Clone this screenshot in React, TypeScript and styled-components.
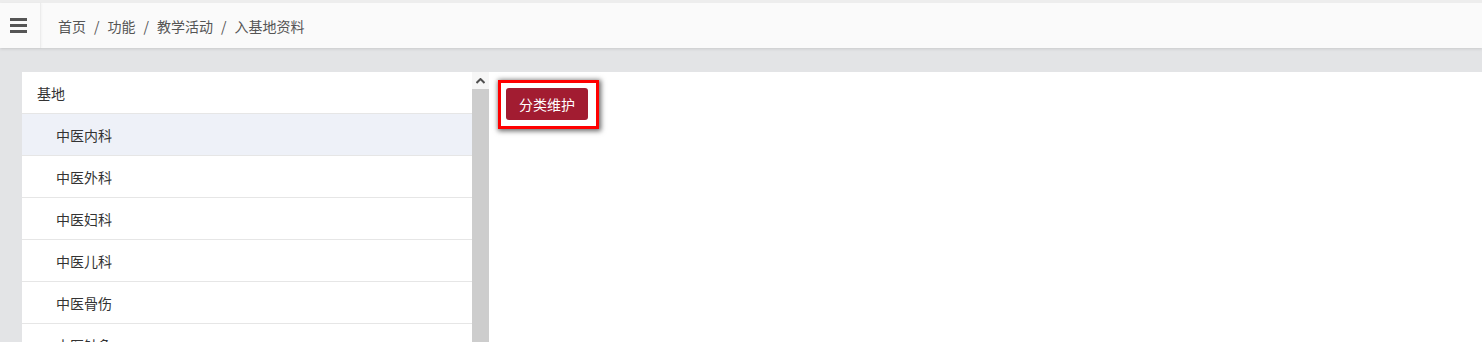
import React from "react";
import styled, { createGlobalStyle } from "styled-components";

const Global = createGlobalStyle`
  html, body { margin: 0; padding: 0; height: 342px; overflow: hidden; }
  body {
    background: #e3e4e6;
    font-family: "Microsoft YaHei", "Noto Sans CJK SC", "Noto Sans", sans-serif;
    font-size: 14px;
    color: #333;
  }
`;

const Page = styled.div`
  display: flex;
  flex-direction: column;
  height: 342px;
`;

const Header = styled.header`
  display: flex;
  align-items: stretch;
  height: 45px;
  border-top: 3px solid #ededed;
  background: #fafafa;
  box-shadow: 0 1px 3px rgba(0, 0, 0, 0.12);
  position: relative;
  z-index: 1;
`;

const MenuToggle = styled.div`
  width: 41px;
  display: flex;
  flex-direction: column;
  align-items: flex-start;
  justify-content: center;
  gap: 3px;
  padding-left: 10px;
  box-sizing: border-box;
  border-right: 1px solid #ececec;
  box-shadow: 1px 0 2px rgba(0, 0, 0, 0.03);
`;

const Bar = styled.span`
  display: block;
  width: 17px;
  height: 3px;
  background: #555;
`;

const Crumbs = styled.nav`
  display: flex;
  align-items: center;
  padding-left: 17px;
  color: #555;
  font-size: 14px;
`;

const Sep = styled.span`
  margin: 0 8px;
  color: #555;
`;

const Main = styled.main`
  flex: 1;
  display: flex;
  margin: 24px 0 0 22px;
  background: #fff;
  min-height: 0;
`;

const ListWrap = styled.div`
  display: flex;
  width: 467px;
  flex-shrink: 0;
`;

const List = styled.ul`
  list-style: none;
  margin: 0;
  padding: 0;
  width: 450px;
  flex-shrink: 0;
`;

const Item = styled.li<{ $level: number; $active?: boolean }>`
  height: 41px;
  display: flex;
  align-items: center;
  padding-left: ${(p) => (p.$level === 0 ? 15 : 34)}px;
  border-bottom: 1px solid #e6e6e6;
  background: ${(p) => (p.$active ? "#eef1f8" : "#fff")};
  color: #333;
  font-size: 14px;
`;

const Scrollbar = styled.div`
  width: 17px;
  display: flex;
  flex-direction: column;
  background: #cdcdcd;
`;

const ScrollArrow = styled.div`
  height: 17px;
  background: #f6f6f6;
  display: flex;
  align-items: center;
  justify-content: center;
`;

const Content = styled.section`
  flex: 1;
  padding: 8px 0 0 9px;
  background: #fff;
`;

const Highlight = styled.div`
  display: inline-block;
  border: 3px solid #ff0000;
  padding: 5px 8px 6px 5px;
  box-shadow: 1px 1px 5px 1px rgba(0, 0, 0, 0.6);
`;

const Button = styled.button`
  display: block;
  width: 82px;
  height: 32px;
  border: none;
  border-radius: 3px;
  background: #a21c31;
  color: #fff;
  font-family: inherit;
  font-size: 14px;
  padding: 0;
  cursor: pointer;
`;

const items = ["中医内科", "中医外科", "中医妇科", "中医儿科", "中医骨伤", "中医针灸"];

export default function App() {
  return (
    <Page>
      <Global />
      <Header>
        <MenuToggle>
          <Bar />
          <Bar />
          <Bar />
        </MenuToggle>
        <Crumbs>
          <span>首页</span>
          <Sep>/</Sep>
          <span>功能</span>
          <Sep>/</Sep>
          <span>教学活动</span>
          <Sep>/</Sep>
          <span>入基地资料</span>
        </Crumbs>
      </Header>
      <Main>
        <ListWrap>
          <List>
            <Item $level={0}>基地</Item>
            {items.map((t, i) => (
              <Item key={t} $level={1} $active={i === 0}>
                {t}
              </Item>
            ))}
          </List>
          <Scrollbar>
            <ScrollArrow>
              <svg width="9" height="6" viewBox="0 0 9 6">
                <path d="M0.5 5 L4.5 1 L8.5 5" fill="none" stroke="#505050" strokeWidth="2" />
              </svg>
            </ScrollArrow>
          </Scrollbar>
        </ListWrap>
        <Content>
          <Highlight>
            <Button>分类维护</Button>
          </Highlight>
        </Content>
      </Main>
    </Page>
  );
}
